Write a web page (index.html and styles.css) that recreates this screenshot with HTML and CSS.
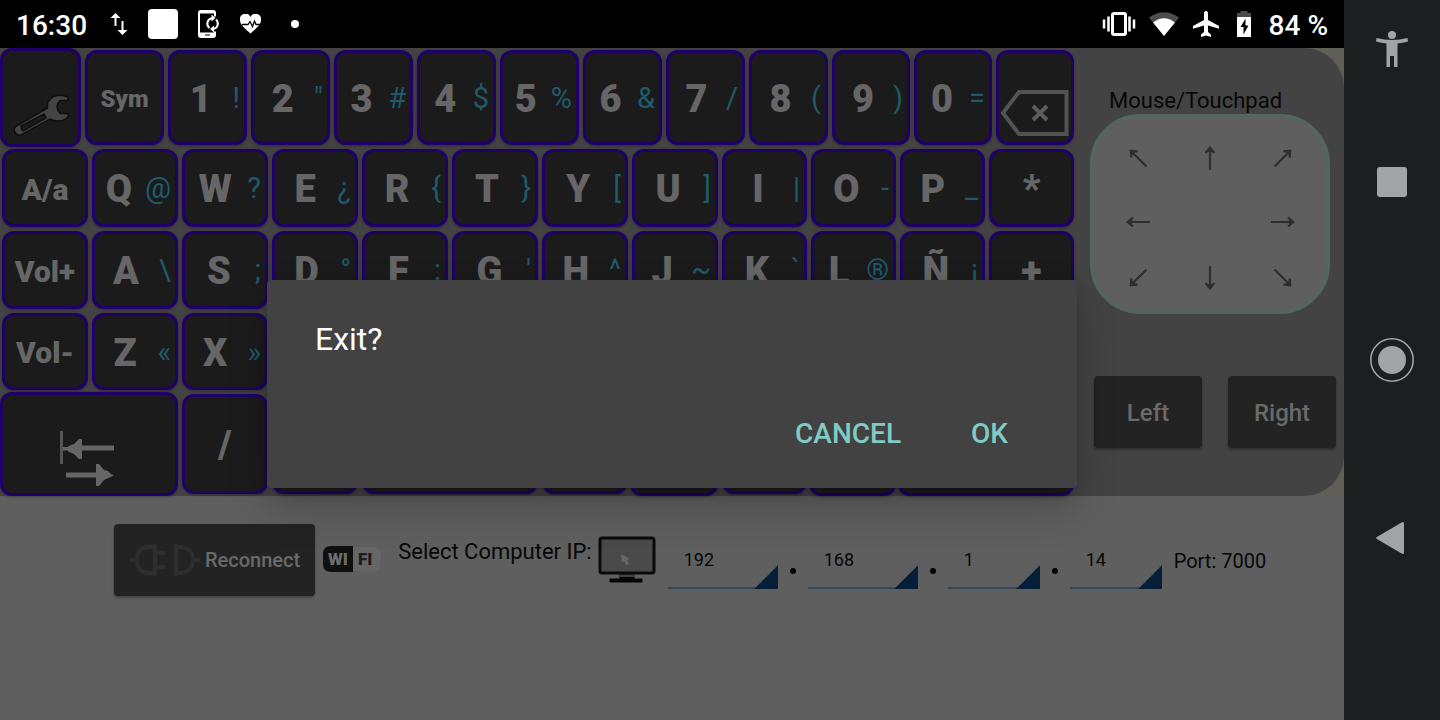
FILE: index.html
```
<!doctype html>
<html lang="en">
<head>
<meta charset="utf-8">
<title>Remote keyboard</title>
<link rel="stylesheet" href="styles.css">
</head>
<body>
<svg class="defs" aria-hidden="true">
	<symbol id="arrow" viewBox="0 0 24 24">
		<path d="M12 24V2M7.500 7L12 2L16.500 7" fill="none" stroke="currentColor" stroke-width="2.200"/>
		<path d="M12 0L7.500 6h9z" fill="currentColor"/>
	</symbol>
</svg>
<main class="app">
	<header class="status">
		<span class="clock">16:30</span>
		<svg class="updown" width="18" height="24" viewBox="0 0 18 24">
			<path d="M5.500 14V4M12.500 9v10" fill="none" stroke="#fff" stroke-width="2"/>
			<path d="M5.500 1l5 5h-10zM12.500 23l5-5h-10z" fill="#fff"/>
		</svg>
		<svg class="square" width="30" height="30" viewBox="0 0 30 30">
			<rect width="30" height="30" rx="4" fill="#fff"/>
		</svg>
		<svg class="sync" width="22" height="28" viewBox="0 0 22 28">
			<path d="M17 6.500V3q0-2-2-2H3Q1 1 1 3v22q0 2 2 2h12q2 0 2-2v-3.500" fill="none" stroke="#fff" stroke-width="2"/>
			<path d="M1 22.500h16V27H1zM1 1h16v2.500H1z" fill="#fff"/>
			<path d="M7 25h5" stroke="#000" stroke-width="1"/>
			<path d="M11.500 18A5.500 5.500 0 0 1 14 8.200M18 9.500A5.500 5.500 0 0 1 15.500 19" fill="none" stroke="#fff" stroke-width="2"/>
			<path d="M13.500 4.500l4 3.500-4 3.500zM16 15.500v7L12 19z" fill="#fff"/>
		</svg>
		<svg class="heart" width="21" height="20" viewBox="0 0 21 20">
			<path d="M10.500 19.500C3 13 0 10 0 6a5.500 5.500 0 0 1 10.500-3A5.500 5.500 0 0 1 21 6c0 4-3 7-10.500 13.500z" fill="#fff"/>
			<path d="M2 10.500h6l2-3 2.500 5L14.500 7l1.500 3.500h4" fill="none" stroke="#000" stroke-width="1.300"/>
		</svg>
		<svg width="8" height="8" viewBox="0 0 8 8"><circle cx="4" cy="4" r="4" fill="#fff"/></svg>
		<div class="system">
			<svg class="vibrate" width="34" height="24" viewBox="0 0 34 24">
				<rect x="10.500" y="1.500" width="13" height="21" rx="1.500" fill="none" stroke="#fff" stroke-width="3"/>
				<path d="M6.500 4.500v15M27.500 4.500v15M2 7.500v9M32 7.500v9" stroke="#fff" stroke-width="2.500"/>
			</svg>
			<svg class="wifi" width="30" height="24" viewBox="0 0 30 24">
				<path d="M15 24L0 5.500Q15-5 30 5.500z" fill="#4c4c4c"/>
				<path d="M15 24L4 10.500Q15 2 26 10.500z" fill="#fff"/>
			</svg>
			<svg class="plane" width="26" height="26" viewBox="0 0 26 26">
				<path d="M13 0c1.300 0 2 1 2 2.300V9l11 6v2.800l-11-3.300V21l3 2.500V26l-5-1.500L8 26v-2.500l3-2.500v-6.500L0 17.800V15l11-6V2.300C11 1 11.700 0 13 0z" fill="#fff"/>
			</svg>
			<svg class="battery" width="14" height="26" viewBox="0 0 14 26">
				<path d="M3.500 0h7v2H14v4H0V2h3.500z" fill="#4c4c4c"/>
				<path d="M0 6h14v20H0z" fill="#fff"/>
				<path d="M8.500 7.500l-5 8.500h3v7.500l5-9h-3z" fill="#000"/>
			</svg>
			<span>84 %</span>
		</div>
	</header>
	<div class="backdrop">
	<section class="panel">
		<div class="keyboard">
			<div class="row numbers">
				<button class="key tall" aria-label="Settings">
					<svg class="wrench" width="60" height="44" viewBox="0 0 60 44">
						<path d="M3.500 33.500Q1 37 3.500 40T9 42l29-16q10 5 18-2v-3.500h-8q-6-7 0-13h8V4Q42-1 36 9q-1 3-.5 6zM9 33l23-12 2 4-23 13q-2-1-2-5z" fill="#444" stroke="#0e0e0e" stroke-width="1.500" fill-rule="evenodd"/>
					</svg>
				</button>
				<button class="key"><b class="tiny">Sym</b></button>
				<button class="key"><b>1</b><i>!</i></button>
				<button class="key"><b>2</b><i>"</i></button>
				<button class="key"><b>3</b><i>#</i></button>
				<button class="key"><b>4</b><i>$</i></button>
				<button class="key"><b>5</b><i>%</i></button>
				<button class="key"><b>6</b><i>&amp;</i></button>
				<button class="key"><b>7</b><i>/</i></button>
				<button class="key"><b>8</b><i>(</i></button>
				<button class="key"><b>9</b><i>)</i></button>
				<button class="key"><b>0</b><i>=</i></button>
				<button class="key" aria-label="Backspace">
					<svg class="backspace" width="68" height="48" viewBox="0 0 68 48">
						<path d="M2 24L18 3h47.500v42H18z" fill="none" stroke="#525252" stroke-width="4"/>
						<path d="M32 17l14 14M46 17L32 31" stroke="#5c5c5c" stroke-width="4"/>
					</svg>
				</button>
			</div>
			<div class="row">
				<button class="key"><b class="small">A/a</b></button>
				<button class="key"><b>Q</b><i>@</i></button>
				<button class="key"><b>W</b><i>?</i></button>
				<button class="key"><b>E</b><i>¿</i></button>
				<button class="key"><b>R</b><i>{</i></button>
				<button class="key"><b>T</b><i>}</i></button>
				<button class="key"><b>Y</b><i>[</i></button>
				<button class="key"><b>U</b><i>]</i></button>
				<button class="key"><b>I</b><i>|</i></button>
				<button class="key"><b>O</b><i>-</i></button>
				<button class="key"><b>P</b><i>_</i></button>
				<button class="key"><b>*</b></button>
			</div>
			<div class="row">
				<button class="key"><b class="small">Vol+</b></button>
				<button class="key"><b>A</b><i>\</i></button>
				<button class="key"><b>S</b><i>;</i></button>
				<button class="key"><b>D</b><i>°</i></button>
				<button class="key"><b>F</b><i>:</i></button>
				<button class="key"><b>G</b><i>'</i></button>
				<button class="key"><b>H</b><i>^</i></button>
				<button class="key"><b>J</b><i>~</i></button>
				<button class="key"><b>K</b><i>`</i></button>
				<button class="key"><b>L</b><i>®</i></button>
				<button class="key"><b>Ñ</b><i>¡</i></button>
				<button class="key"><b>+</b></button>
			</div>
			<div class="row">
				<button class="key"><b class="small">Vol-</b></button>
				<button class="key"><b>Z</b><i>«</i></button>
				<button class="key"><b>X</b><i>»</i></button>
			</div>
			<div class="row">
				<button class="key tall double" aria-label="Tab">
					<svg class="tab" width="56" height="56" viewBox="0 0 56 56">
						<path d="M2.500 0v33" stroke="#555" stroke-width="3"/>
						<path d="M2 18h12M20 17h35M7 44h34" stroke="#666" stroke-width="5"/>
						<path d="M7 18l3-3 5-2 5-5h3v20h-3l-5-5-5-2zM37 33h3l5 6 4 1 3 3 3 1-3 2-3 1-4 2-5 6h-3z" fill="#666"/>
						<path d="M2 14.500h7M2 21h7" stroke="#1b1b1b" stroke-width="3"/>
						<path d="M2.500 0v33" stroke="#555" stroke-width="3"/>
					</svg>
				</button>
				<button class="key"><b>/</b></button>
				<button class="key"></button>
				<button class="key double"></button>
				<button class="key"></button>
				<button class="key tall"></button>
				<button class="key"></button>
				<button class="key tall"></button>
				<button class="key tall double"></button>
			</div>
		</div>
		<div class="mouse">
			<h2>Mouse/Touchpad</h2>
			<div class="touchpad">
				<svg class="nw"><use href="#arrow"/></svg>
				<svg><use href="#arrow"/></svg>
				<svg class="ne"><use href="#arrow"/></svg>
				<svg class="w"><use href="#arrow"/></svg>
				<span></span>
				<svg class="e"><use href="#arrow"/></svg>
				<svg class="sw"><use href="#arrow"/></svg>
				<svg class="s"><use href="#arrow"/></svg>
				<svg class="se"><use href="#arrow"/></svg>
			</div>
			<div class="clicks">
				<button>Left</button>
				<button>Right</button>
			</div>
		</div>
	</section>
	</div>
	<section class="connection">
		<button class="reconnect">
			<svg width="70" height="36" viewBox="0 0 70 36" fill="none" stroke="#2e2e2e" stroke-width="4">
				<path d="M0 18h7M25 2v32M25 5h-7Q7 6 7 18t11 13h7M25 11h10M25 25h10M46 2v32M46 5h4q13 1 13 13T50 31h-4M63 18h7"/>
			</svg>
			Reconnect
		</button>
		<svg class="wifi-logo" width="60" height="28" viewBox="0 0 60 28">
			<rect x="4" y="1" width="54" height="24" rx="7" fill="#666"/>
			<path d="M8 0h22v26H8q-8 0-8-8V8q0-8 8-8z" fill="#101010"/>
			<text x="5" y="19" fill="#6c6c6c">WI</text>
			<text x="35" y="19" fill="#1c1c1c">FI</text>
		</svg>
		<label class="title" for="ip1">Select Computer IP:</label>
		<svg class="monitor" width="58" height="48" viewBox="0 0 58 48">
			<rect x="2" y="2" width="54" height="35" rx="2" fill="#4a4a4a" stroke="#0b0b0b" stroke-width="3"/>
			<path d="M22 39h14v4h8v3H12v-3h10z" fill="#050505" stroke="#050505"/>
			<path d="M22 40h14" stroke="#444" stroke-width="2"/>
			<path d="M23 18l9 5-3 1 2 4-3 1-2-4-2 2z" fill="#666"/>
		</svg>
		<div class="address">
			<select id="ip1"><option>192</option></select>
			<span class="dot"></span>
			<select aria-label="Second part"><option>168</option></select>
			<span class="dot"></span>
			<select class="narrow" aria-label="Third part"><option>1</option></select>
			<span class="dot"></span>
			<select class="narrow" aria-label="Fourth part"><option>14</option></select>
		</div>
		<span class="port">Port: 7000</span>
	</section>
	<div class="overlay">
		<div class="dialog" role="dialog" aria-labelledby="question">
			<p id="question">Exit?</p>
			<div class="actions">
				<button>CANCEL</button>
				<button>OK</button>
			</div>
		</div>
	</div>
</main>
<nav class="navbar">
	<button aria-label="Accessibility">
		<svg width="32" height="36" viewBox="0 0 32 36">
			<circle cx="16" cy="4" r="4"/>
			<path d="M.5 7Q16 11 31.500 7l.5 3.500q-5 1.500-10.500 2V36h-3.500V25h-4v11H10.500V12.500Q5 12 0 10.500z"/>
		</svg>
	</button>
	<button aria-label="Recent apps">
		<svg width="30" height="30" viewBox="0 0 30 30"><rect width="30" height="30" rx="3"/></svg>
	</button>
	<button aria-label="Home">
		<svg width="44" height="44" viewBox="0 0 44 44">
			<circle cx="22" cy="22" r="14"/>
			<circle cx="22" cy="22" r="21.200" fill="none" stroke="#a2a3a4" stroke-width="1.600"/>
		</svg>
	</button>
	<button aria-label="Back">
		<svg width="32" height="32" viewBox="0 0 32 32"><path d="M26 .3q2-.8 2 1.500v28.400q0 2.300-2 1.500L.8 17q-1.200-1 0-2z"/></svg>
	</button>
</nav>
</body>
</html>
```

FILE: styles.css
```
* {
	box-sizing: border-box;
	margin: 0;
	padding: 0;
}

body {
	background: #5f5f5f;
	display: flex;
	font-family: Roboto, "Liberation Sans", sans-serif;
	min-height: 100vh;
}

button {
	border: 0;
	font-family: inherit;
}

svg {
	display: block;
	flex: none;
}

.defs {
	height: 0;
	position: absolute;
	width: 0;
}

.app {
	flex: 1;
	position: relative;
}

/* status bar */
.status {
	align-items: center;
	background: #000;
	color: #fff;
	display: flex;
	font-size: 28px;
	font-weight: 500;
	height: 48px;
	padding: 0 16px;
}

.clock {
	padding-top: 2px;
}

.updown {
	margin-left: 23px;
}

.square {
	margin-left: 20px;
}

.sync {
	margin-left: 20px;
}

.heart {
	margin: 0 30px 0 20px;
}

.system {
	align-items: center;
	display: flex;
	margin-left: auto;
}

.system span {
	padding-top: 2px;
}

.wifi {
	margin-left: 13px;
}

.plane {
	margin-left: 14px;
}

.battery {
	margin: 0 18px 0 18px;
}

/* keyboard */
.backdrop {
	background: #5f5f56;
}

.panel {
	background: #434343;
	border-radius: 0 40px 40px 0;
	display: flex;
}

.keyboard {
	display: flex;
	flex: 1;
	flex-direction: column;
	gap: 4px;
	padding: 2px;
}

.row {
	display: grid;
	gap: 4px;
	grid-auto-rows: 78px;
	grid-template-columns: repeat(8, 86fr) repeat(4, 85fr);
}

.row:nth-child(4) {
	grid-auto-rows: 77px;
}

.row:last-child {
	grid-auto-rows: 100px;
}

.numbers {
	grid-auto-rows: 95px;
	grid-template-columns: repeat(10, 79fr) repeat(3, 78fr);
}

.key {
	align-items: center;
	background: #1b1b1b;
	border: 3px solid #1e0068;
	border-radius: 12px;
	box-shadow: 0 1px 3px rgba(0,0,0,.35);
	color: #666;
	display: flex;
	justify-content: center;
	min-width: 0;
	overflow: hidden;
	padding: 2px 4px 0 0;
}

.key b {
	flex: 1;
	font-size: 38px;
	font-weight: 900;
	padding-right: 2px;
	text-align: center;
}

.key b:only-child {
	padding: 0 0 0 4px;
}

.key .small {
	font-size: 30px;
}

.key .tiny {
	font-size: 24px;
}

.key i {
	color: #1e5a6a;
	font-size: 29px;
	font-style: normal;
	padding-bottom: 2px;
}

.tall {
	margin: -2px 0 -2px -2px;
}

.double {
	grid-column: span 2;
}

.wrench {
	align-self: flex-end;
	margin: 0 0 7px 6px;
}

.backspace {
	align-self: flex-end;
	margin: 0 0 5px 4px;
}

.tab {
	align-self: flex-end;
	margin-bottom: 6px;
}

/* mouse */
.mouse {
	padding: 40px 8px 0 14px;
	width: 268px;
}

.mouse h2 {
	color: #070707;
	font-size: 22px;
	font-weight: 400;
	line-height: 26px;
	padding-left: 19px;
}

.touchpad {
	align-items: center;
	background: #5f5f5f;
	border: 4px solid #53665f;
	border-radius: 50px;
	color: #2e2e2e;
	display: grid;
	grid-template-columns: repeat(3, 1fr);
	grid-template-rows: 60px 68px 1fr;
	height: 200px;
	justify-items: center;
	margin-right: 6px;
	padding: 10px 7px 10px 8px;
}

.touchpad svg {
	height: 24px;
	width: 24px;
}

.ne { transform: rotate(45deg); }
.e { transform: rotate(90deg); }
.se { transform: rotate(135deg); }
.s { transform: rotate(180deg); }
.sw { transform: rotate(225deg); }
.w { transform: rotate(270deg); }
.nw { transform: rotate(315deg); }

.clicks {
	display: flex;
	gap: 26px;
	margin: 62px 0 0 4px;
}

.clicks button, .reconnect {
	background: #232323;
	border-radius: 4px;
	box-shadow: 0 2px 3px rgba(0,0,0,.3);
	color: #6a6a6a;
	font-weight: 500;
	height: 72px;
}

.clicks button {
	flex: 1;
	font-size: 24px;
	padding-top: 2px;
}

/* connection */
.connection {
	align-items: center;
	color: #070707;
	display: flex;
	padding: 28px 40px 28px 114px;
	white-space: nowrap;
}

.reconnect {
	align-items: center;
	display: flex;
	font-size: 20px;
	gap: 5px;
	padding: 0 15px 0 16px;
}

.wifi-logo {
	font-size: 17px;
	font-weight: 900;
	margin: 0 15px 0 8px;
}

.title {
	font-size: 22px;
	padding-bottom: 18px;
}

.monitor {
	margin: 0 12px 0 6px;
}

.address {
	align-items: center;
	display: flex;
	gap: 12px;
}

select {
	appearance: none;
	background:
		linear-gradient(135deg, transparent 49%, #061f38 52%) right bottom / 24px 24px no-repeat,
		linear-gradient(#32475a, #32475a) left bottom / 100% 2px no-repeat;
	border: 0;
	border-radius: 0;
	color: #070707;
	font-family: inherit;
	font-size: 18px;
	height: 58px;
	padding: 0 28px 2px 16px;
	width: 110px;
}

.narrow {
	width: 92px;
}

.dot {
	background: #000;
	border-radius: 50%;
	height: 6px;
	margin-top: 22px;
	width: 6px;
}

.port {
	font-size: 20px;
	margin-left: 12px;
	padding-top: 2px;
}

/* dialog */
.overlay {
	align-items: center;
	display: flex;
	inset: 48px 0 0;
	justify-content: center;
	position: absolute;
}

.dialog {
	background: #424242;
	border-radius: 4px;
	box-shadow: 0 20px 40px rgba(0,0,0,.22), 0 4px 12px rgba(0,0,0,.12);
	color: #fff;
	height: 208px;
	padding: 40px 48px 24px;
	width: 810px;
}

.dialog p {
	font-size: 32px;
	line-height: 38px;
}

.actions {
	display: flex;
	gap: 38px;
	justify-content: flex-end;
	padding: 39px 5px 0 0;
}

.actions button {
	background: none;
	color: #80cbc4;
	font-size: 28px;
	font-weight: 500;
	height: 72px;
	padding: 0 16px;
}

/* navigation bar */
.navbar {
	background: #1c1f20;
	display: grid;
	grid-template-rows: 93px 1fr 1fr 1fr 93px;
	width: 96px;
}

.navbar button {
	align-items: center;
	background: none;
	display: flex;
	fill: #a2a3a4;
	justify-content: center;
	padding-top: 4px;
}

.navbar button:nth-child(n+2) {
	padding: 0;
}
```
